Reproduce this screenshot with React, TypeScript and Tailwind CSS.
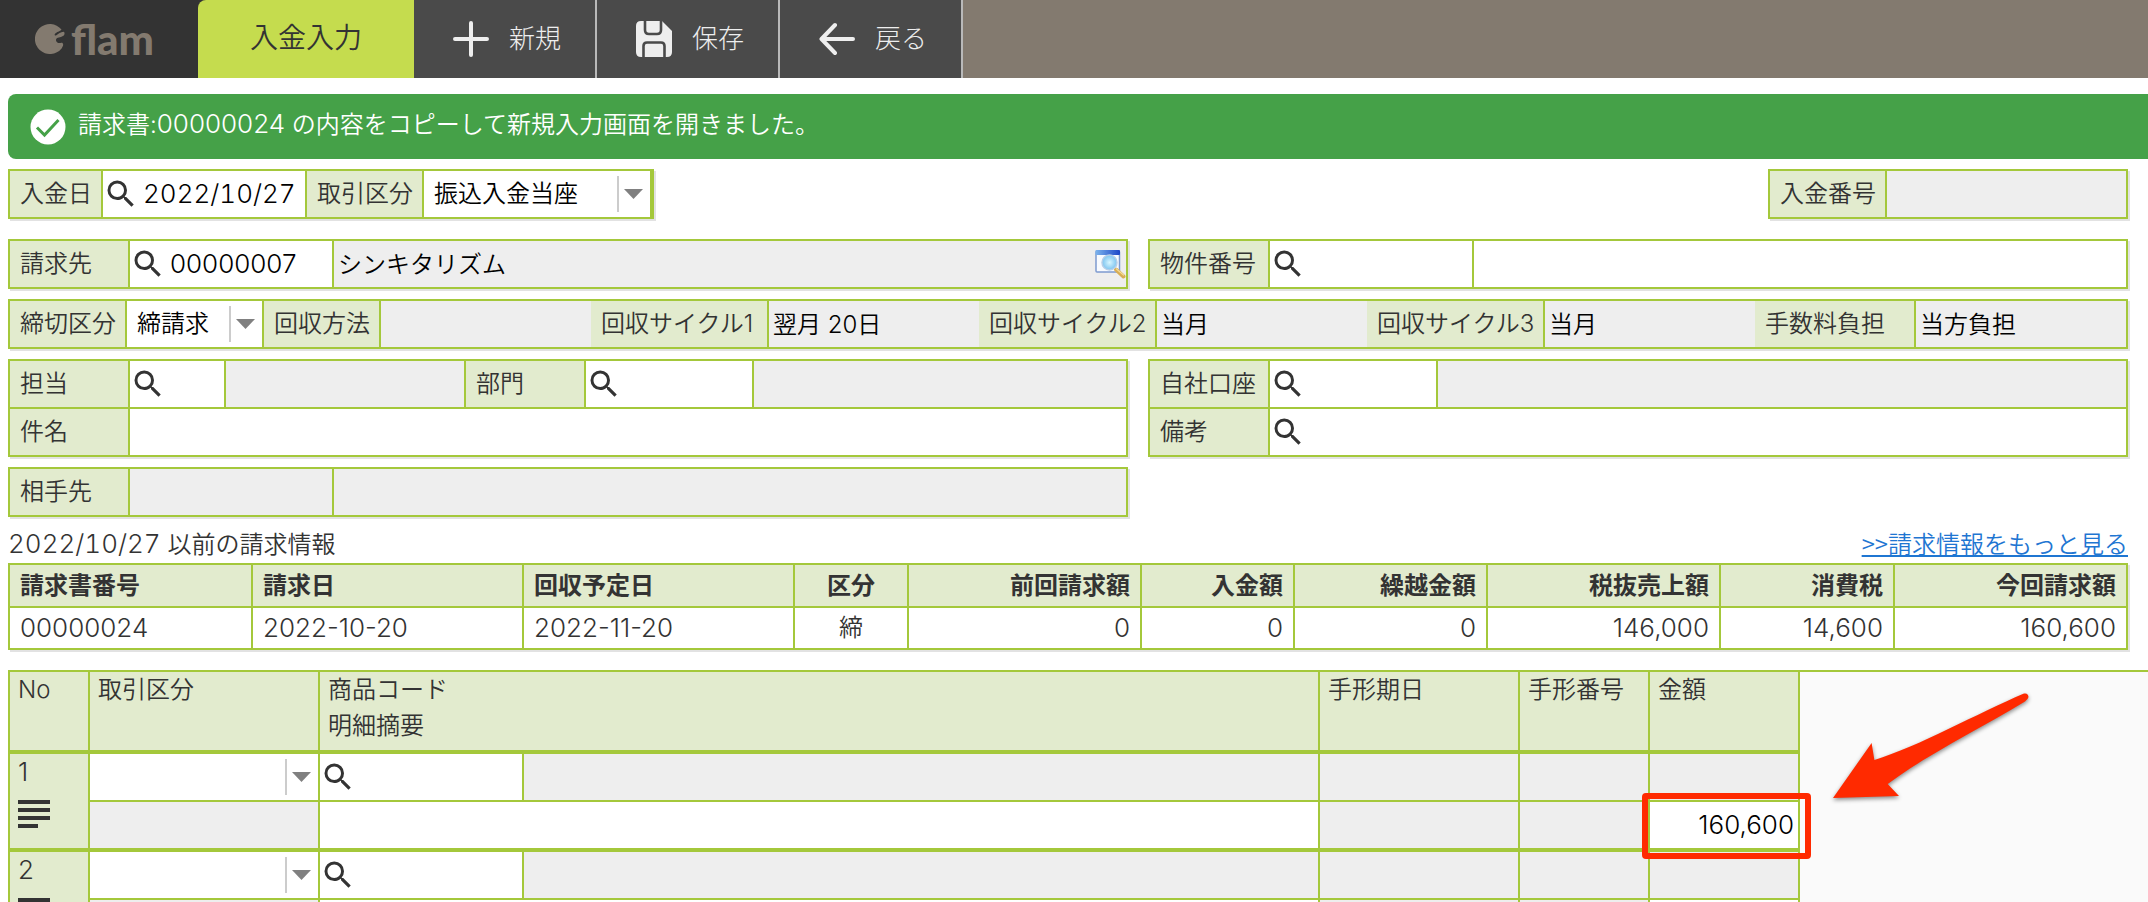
import { useId, type ReactNode } from "react";
import { MdSearch } from "react-icons/md";

function Panel({ children, className = "" }: { children: ReactNode; className?: string }) {
  return (
    <div className={`border-2 border-[#a4c83b] shadow-[2px_2px_0_#e2e2e2] ${className}`}>{children}</div>
  );
}

function Row({ children }: { children: ReactNode }) {
  return <div className="flex h-[46px]">{children}</div>;
}

const labelClass = "flex shrink-0 items-center bg-[#e2ebce] pl-[10px] text-[#333] border-r-2 border-[#a4c83b]";

function Label({ id, text, className }: { id: string; text: string; className: string }) {
  return (
    <label htmlFor={id} className={`${labelClass} ${className}`}>
      {text}
    </label>
  );
}

function SearchBox({ id, name, value = "" }: { id?: string; name: string; value?: string }) {
  return (
    <div className="flex h-[46px] w-full items-center bg-white">
      <button type="button" aria-label={`${name}を検索`} className="shrink-0 text-[#333]">
        <MdSearch className="size-9" />
      </button>
      <input
        id={id}
        aria-label={name}
        defaultValue={value}
        className={`h-full w-full min-w-0 bg-transparent pb-[2px] pl-1 text-[26px] text-black outline-none ${value.includes("/") ? "tabular-nums" : ""}`}
      />
    </div>
  );
}

function ReadOnly({ id, name, value = "" }: { id?: string; name: string; value?: string }) {
  return (
    <input id={id} aria-label={name} readOnly value={value} className="h-[46px] w-full min-w-0 bg-[#eee] px-1 pb-1 text-black outline-none" />
  );
}

function Select({ id, name, value }: { id?: string; name: string; value: string }) {
  return (
    <div className="relative h-[46px] w-full bg-white">
      <select id={id} aria-label={name} defaultValue={value} className="h-full w-full appearance-none bg-transparent pr-9 pl-[10px] text-black outline-none">
        <option value={value}>{value}</option>
      </select>
      <div className="pointer-events-none absolute top-[5px] right-[7px] flex h-9 items-center border-l-2 border-[#ccc] pl-[5px]">
        <svg viewBox="0 0 19 10" className="h-[10px] w-[19px]" aria-hidden="true">
          <path d="M0 0H19L9.5 10Z" fill="#808080" />
        </svg>
      </div>
    </div>
  );
}

function Logo() {
  return (
    <div className="flex w-[198px] shrink-0 items-center bg-[#333] pl-[35px] text-[#837a6f]">
      <svg viewBox="0 0 30 30" className="size-[30px]" aria-hidden="true">
        <path d="M26.500 5.500A15 15 0 1 0 26.600 24.400C28 22.600 28.600 20.400 27.800 19.400C26.600 18 24.400 19.800 22.800 18.800C21 17.800 20.400 15.600 21.600 14.600C22.800 13.400 26.800 13.400 28.800 11.600C30 10 29.600 8 28.600 7.800C25.600 8 23.400 10 21 11.400C20 12 19.200 11.200 19.800 10.200C21.600 7.600 25 7.600 26.500 5.500Z" fill="currentColor" />
      </svg>
      <span className="pl-[6px] font-[Lato] text-[42px] leading-none font-black">flam</span>
    </div>
  );
}

function PlusIcon() {
  return (
    <svg viewBox="0 0 36 36" className="size-9" aria-hidden="true">
      <path d="M18 2V34M2 18H34" stroke="currentColor" strokeWidth="4" strokeLinecap="round" />
    </svg>
  );
}

function SaveIcon() {
  return (
    <svg viewBox="0 0 36 36" className="size-9" aria-hidden="true">
      <path d="M5 0H26L36 10V31Q36 36 31 36H5Q0 36 0 31V5Q0 0 5 0Z" fill="currentColor" />
      <path d="M9 0V9Q9 13 13 13H21Q25 13 25 9V0" fill="none" stroke="#4a4a4a" strokeWidth="2.6" />
      <path d="M7.500 36V25Q7.500 21.500 11 21.500H25Q28.500 21.500 28.500 25V36" fill="none" stroke="#4a4a4a" strokeWidth="2.6" />
    </svg>
  );
}

function BackIcon() {
  return (
    <svg viewBox="0 0 36 36" className="size-9" aria-hidden="true">
      <path d="M34 18H3M16 4L2.500 18L16 32" fill="none" stroke="currentColor" strokeWidth="4" strokeLinecap="round" strokeLinejoin="round" />
    </svg>
  );
}

function ToolButton({ icon, text }: { icon: ReactNode; text: string }) {
  return (
    <button type="button" className="flex w-[183px] shrink-0 items-center gap-5 border-r-2 border-[#b9b9b9] bg-[#4a4a4a] pl-[39px] text-[26px] font-light text-[#eee]">
      {icon}
      {text}
    </button>
  );
}

function DetailWindowIcon() {
  return (
    <svg viewBox="0 0 32 32" className="size-8" aria-hidden="true">
      <defs>
        <linearGradient id="bar" x1="0" x2="1">
          <stop offset="0" stopColor="#7db4ec" />
          <stop offset="1" stopColor="#1c46c8" />
        </linearGradient>
        <radialGradient id="lens">
          <stop offset="0" stopColor="#d8f6ff" />
          <stop offset="1" stopColor="#7cc4f0" />
        </radialGradient>
      </defs>
      <rect x="2" y="3" width="23.500" height="21" rx="1" fill="#f8fbff" stroke="#7d9bd0" strokeWidth="1.500" />
      <rect x="1.500" y="2" width="24.500" height="5" rx="1" fill="url(#bar)" />
      <path d="M22 21.500L29.500 28.500" stroke="#d9ae55" strokeWidth="4" strokeLinecap="round" />
      <path d="M22.500 21L29.500 27" stroke="#f4dc98" strokeWidth="1.200" strokeLinecap="round" />
      <circle cx="15.500" cy="14.500" r="7.500" fill="url(#lens)" stroke="#b6cfe8" strokeWidth="1.500" />
    </svg>
  );
}

const invoiceColumns = [
  { title: "請求書番号", value: "00000024", className: "w-[243px] text-left" },
  { title: "請求日", value: "2022-10-20", className: "w-[271px] text-left" },
  { title: "回収予定日", value: "2022-11-20", className: "w-[271px] text-left" },
  { title: "区分", value: "締", className: "w-[114px] text-center" },
  { title: "前回請求額", value: "0", className: "w-[233px] text-right" },
  { title: "入金額", value: "0", className: "w-[153px] text-right" },
  { title: "繰越金額", value: "0", className: "w-[193px] text-right" },
  { title: "税抜売上額", value: "146,000", className: "w-[233px] text-right" },
  { title: "消費税", value: "14,600", className: "w-[174px] text-right" },
  { title: "今回請求額", value: "160,600", className: "w-[233px] text-right" },
];

function InvoiceTable() {
  return (
    <table className="w-full table-fixed border-separate border-spacing-0 border-t-2 border-l-2 border-[#a4c83b] leading-6 shadow-[2px_2px_0_#e2e2e2]">
      <thead>
        <tr>
          {invoiceColumns.map((c) => (
            <th key={c.title} className={`h-[43px] border-r-2 border-b-2 border-[#a4c83b] bg-[#e2ebce] px-[10px] font-bold ${c.className}`}>
              {c.title}
            </th>
          ))}
        </tr>
      </thead>
      <tbody>
        <tr>
          {invoiceColumns.map((c) => (
            <td key={c.title} className={`h-[42px] border-r-2 border-b-2 border-[#a4c83b] bg-white px-[10px] ${c.title === "区分" ? "" : "text-[26px]"} ${c.className}`}>
              {c.value}
            </td>
          ))}
        </tr>
      </tbody>
    </table>
  );
}

const headCell = "h-[82px] border-r-2 border-b-4 border-[#a4c83b] bg-[#e2ebce] px-2 text-left align-top font-[350] leading-9";
const upper = "h-[48px] border-r-2 border-b-2 border-[#a4c83b] p-0";
const lower = "h-[50px] border-r-2 border-b-4 border-[#a4c83b] p-0";

function DetailRows({ no, amount }: { no: number; amount: string }) {
  return (
    <tbody>
      <tr>
        <th rowSpan={2} scope="row" className="border-r-2 border-b-4 border-[#a4c83b] bg-[#e2ebce] px-2 text-left align-top font-[350]">
          <div className="h-[46px] text-[26px] leading-9">{no}</div>
          <button type="button" aria-label={`${no}行目のメニュー`} className="block">
            <svg viewBox="0 0 32 28" className="h-7 w-8" aria-hidden="true">
              <path d="M0 0H32V4H0ZM0 8H32V12H0ZM0 16H32V20H0ZM0 24H20V28H0Z" fill="#333" />
            </svg>
          </button>
        </th>
        <td className={upper}>
          <Select name={`取引区分 ${no}`} value="" />
        </td>
        <td className={upper}>
          <SearchBox name={`商品コード ${no}`} />
        </td>
        <td className={`${upper} bg-[#eee]`} />
        <td className={`${upper} bg-[#eee]`} />
        <td className={`${upper} bg-[#eee]`} />
        <td className={`${upper} bg-[#eee]`} />
      </tr>
      <tr>
        <td className={`${lower} bg-[#eee]`} />
        <td colSpan={2} className={lower}>
          <input aria-label={`明細摘要 ${no}`} className="block h-[46px] w-full bg-white px-1 text-black outline-none" />
        </td>
        <td className={`${lower} bg-[#eee]`} />
        <td className={`${lower} bg-[#eee]`} />
        <td className={`relative ${lower}`}>
          <input aria-label={`金額 ${no}`} defaultValue={amount} className="block h-[46px] w-full bg-white px-1 pb-[2px] text-right text-[26px] text-black outline-none" />
          {amount !== "" && (
            <div className="pointer-events-none absolute -top-[9px] -right-[13px] -bottom-[11px] -left-2 z-10 rounded-[4px] border-6 border-[#ff2a00]" />
          )}
        </td>
      </tr>
    </tbody>
  );
}

function PointerArrow() {
  return (
    <svg viewBox="0 0 210 120" className="pointer-events-none absolute top-[18px] left-[1820px] h-[120px] w-[210px] overflow-visible" aria-hidden="true">
      <path
        d="M5 108L43.600 53L46.400 70C90 57 150 23 196 3.600Q200 2.500 200.500 7Q200 9.500 197 11.500C150 40 100 64 59.700 94L71 106Z"
        fill="#ff2a00"
        className="drop-shadow-[0_2px_2px_rgba(0,0,0,0.45)]"
      />
    </svg>
  );
}

export default function App() {
  const id = useId();
  return (
    <div className="flex h-screen flex-col overflow-hidden bg-white font-[Inter,'Noto_Sans_CJK_JP',sans-serif] text-2xl font-[350] text-[#333]">
      <header className="flex h-[78px] shrink-0 bg-[#837a6f]">
        <Logo />
        <div className="flex bg-[#333]">
          <h1 className="flex w-[216px] items-center justify-center rounded-tl-lg bg-[#c5dc4e] text-[28px]">入金入力</h1>
        </div>
        <ToolButton icon={<PlusIcon />} text="新規" />
        <ToolButton icon={<SaveIcon />} text="保存" />
        <ToolButton icon={<BackIcon />} text="戻る" />
      </header>

      <div role="status" className="mt-4 ml-2 flex h-[65px] shrink-0 items-center rounded-l-lg bg-[#45a148] pl-[22px] text-white">
        <svg viewBox="0 0 36 36" className="size-9" aria-hidden="true">
          <circle cx="18" cy="18" r="17.500" fill="#fff" />
          <path d="M7 18.500L14.500 26L28.500 11" fill="none" stroke="#45a148" strokeWidth="3" />
        </svg>
        <p className="pb-1 pl-3">
          請求書:<span className="text-[26px]">00000024</span> の内容をコピーして新規入力画面を開きました。
        </p>
      </div>

      <main className="flex min-h-0 flex-1 flex-col pt-[10px] pl-2">
        <form className="flex shrink-0 flex-col gap-[10px] pr-5">
          <div className="mb-[10px] flex justify-between">
            <Panel>
              <Row>
                <Label id={`${id}-date`} text="入金日" className="w-[93px]" />
                <div className="w-[204px] border-r-2 border-[#a4c83b]">
                  <SearchBox id={`${id}-date`} name="入金日" value="2022/10/27" />
                </div>
                <Label id={`${id}-kind`} text="取引区分" className="w-[117px]" />
                <div className="w-[228px] border-r-2 border-[#a4c83b]">
                  <Select id={`${id}-kind`} name="取引区分" value="振込入金当座" />
                </div>
              </Row>
            </Panel>
            <Panel className="w-[360px]">
              <Row>
                <Label id={`${id}-no`} text="入金番号" className="w-[117px]" />
                <ReadOnly id={`${id}-no`} name="入金番号" />
              </Row>
            </Panel>
          </div>

          <div className="grid grid-cols-[8fr_7fr] gap-5">
            <Panel>
              <Row>
                <Label id={`${id}-bill`} text="請求先" className="w-[120px]" />
                <div className="w-[204px] shrink-0 border-r-2 border-[#a4c83b]">
                  <SearchBox id={`${id}-bill`} name="請求先" value="00000007" />
                </div>
                <ReadOnly name="請求先名" value="シンキタリズム" />
                <button type="button" aria-label="請求先の詳細" className="shrink-0 bg-[#eee]">
                  <DetailWindowIcon />
                </button>
              </Row>
            </Panel>
            <Panel>
              <Row>
                <Label id={`${id}-property`} text="物件番号" className="w-[120px]" />
                <div className="w-[204px] shrink-0 border-r-2 border-[#a4c83b]">
                  <SearchBox id={`${id}-property`} name="物件番号" />
                </div>
                <input aria-label="物件名" className="w-full min-w-0 px-1 text-black outline-none" />
              </Row>
            </Panel>
          </div>

          <Panel>
            <Row>
              <Label id={`${id}-close`} text="締切区分" className="w-[117px]" />
              <div className="w-[137px] shrink-0 border-r-2 border-[#a4c83b]">
                <Select id={`${id}-close`} name="締切区分" value="締請求" />
              </div>
              <Label id={`${id}-method`} text="回収方法" className="w-[117px]" />
              <ReadOnly id={`${id}-method`} name="回収方法" />
              <Label id={`${id}-cycle1`} text="回収サイクル1" className="w-[178px]" />
              <ReadOnly id={`${id}-cycle1`} name="回収サイクル1" value="翌月 20日" />
              <Label id={`${id}-cycle2`} text="回収サイクル2" className="w-[178px]" />
              <ReadOnly id={`${id}-cycle2`} name="回収サイクル2" value="当月" />
              <Label id={`${id}-cycle3`} text="回収サイクル3" className="w-[178px]" />
              <ReadOnly id={`${id}-cycle3`} name="回収サイクル3" value="当月" />
              <Label id={`${id}-fee`} text="手数料負担" className="w-[161px]" />
              <ReadOnly id={`${id}-fee`} name="手数料負担" value="当方負担" />
            </Row>
          </Panel>

          <div className="grid grid-cols-[8fr_7fr] gap-5">
            <Panel className="flex flex-col gap-[2px] bg-[#a4c83b]">
              <Row>
                <Label id={`${id}-staff`} text="担当" className="w-[120px]" />
                <div className="w-[96px] shrink-0 border-r-2 border-[#a4c83b]">
                  <SearchBox id={`${id}-staff`} name="担当" />
                </div>
                <div className="w-[240px] shrink-0 border-r-2 border-[#a4c83b]">
                  <ReadOnly name="担当者名" />
                </div>
                <Label id={`${id}-dept`} text="部門" className="w-[120px]" />
                <div className="w-[168px] shrink-0 border-r-2 border-[#a4c83b]">
                  <SearchBox id={`${id}-dept`} name="部門" />
                </div>
                <ReadOnly name="部門名" />
              </Row>
              <Row>
                <Label id={`${id}-subject`} text="件名" className="w-[120px]" />
                <input id={`${id}-subject`} className="w-full min-w-0 bg-white px-1 text-black outline-none" />
              </Row>
            </Panel>
            <Panel className="flex flex-col gap-[2px] bg-[#a4c83b]">
              <Row>
                <Label id={`${id}-account`} text="自社口座" className="w-[120px]" />
                <div className="w-[168px] shrink-0 border-r-2 border-[#a4c83b]">
                  <SearchBox id={`${id}-account`} name="自社口座" />
                </div>
                <ReadOnly name="自社口座名" />
              </Row>
              <Row>
                <Label id={`${id}-note`} text="備考" className="w-[120px]" />
                <SearchBox id={`${id}-note`} name="備考" />
              </Row>
            </Panel>
          </div>

          <div className="grid grid-cols-[8fr_7fr] gap-5">
            <Panel>
              <Row>
                <Label id={`${id}-partner`} text="相手先" className="w-[120px]" />
                <div className="w-[204px] shrink-0 border-r-2 border-[#a4c83b]">
                  <ReadOnly id={`${id}-partner`} name="相手先" />
                </div>
                <ReadOnly name="相手先名" />
              </Row>
            </Panel>
          </div>
        </form>

        <section className="shrink-0 pt-[10px] pr-5">
          <div className="flex h-9 items-baseline justify-between">
            <h2>
              <span className="text-[26px] tabular-nums">2022/10/27</span> 以前の請求情報
            </h2>
            <a href="#invoices" className="font-['Noto_Sans_CJK_JP'] text-[#1f76d2] underline">&gt;&gt;請求情報をもっと見る</a>
          </div>
          <InvoiceTable />
        </section>

        <section className="relative mt-5 min-h-0 flex-1 overflow-hidden border-t-2 border-[#a4c83b] bg-[#fafafa]">
          <table className="w-[1792px] table-fixed border-separate border-spacing-0 border-l-2 border-[#a4c83b]">
            <colgroup>
              <col className="w-[80px]" />
              <col className="w-[230px]" />
              <col className="w-[204px]" />
              <col className="w-[796px]" />
              <col className="w-[200px]" />
              <col className="w-[130px]" />
              <col className="w-[150px]" />
            </colgroup>
            <thead>
              <tr>
                <th className={headCell}>No</th>
                <th className={headCell}>取引区分</th>
                <th colSpan={2} className={headCell}>
                  商品コード
                  <br />
                  明細摘要
                </th>
                <th className={headCell}>手形期日</th>
                <th className={headCell}>手形番号</th>
                <th className={headCell}>金額</th>
              </tr>
            </thead>
            <DetailRows no={1} amount="160,600" />
            <DetailRows no={2} amount="" />
          </table>
          <PointerArrow />
        </section>
      </main>
    </div>
  );
}
